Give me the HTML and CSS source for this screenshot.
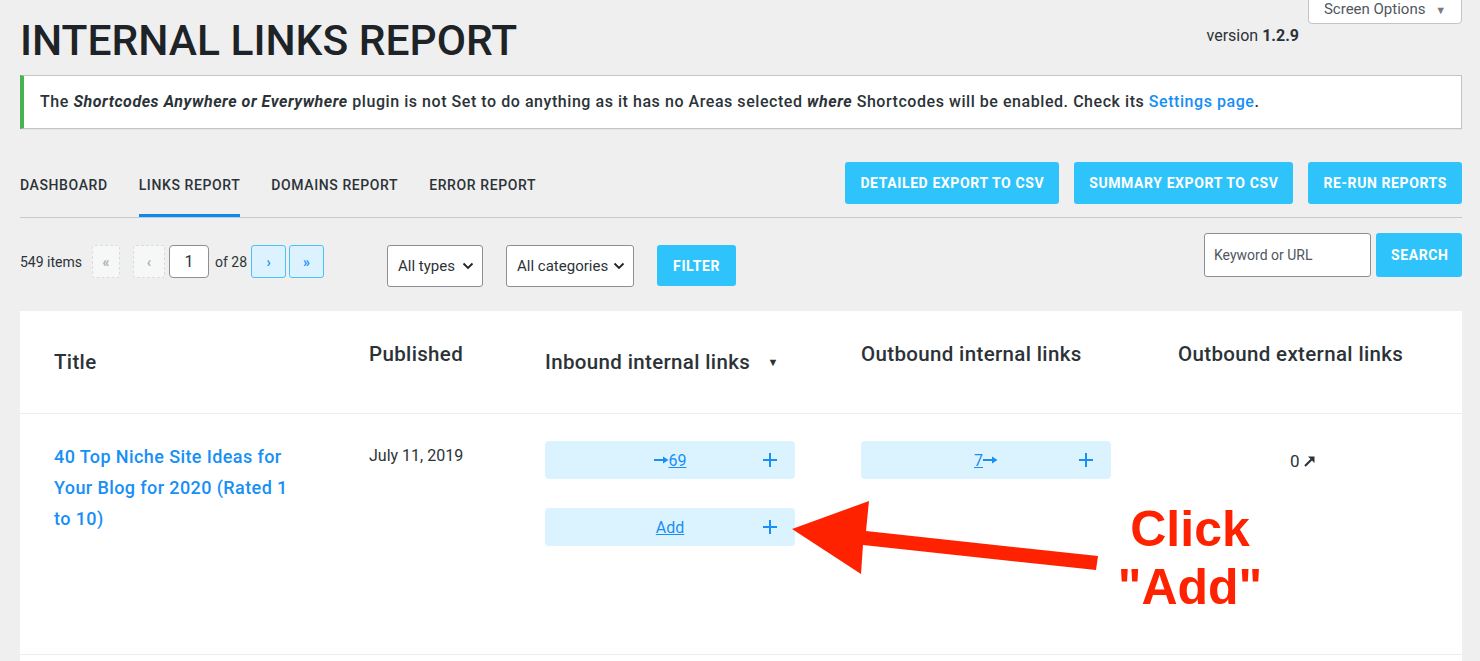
FILE: index.html
```html
<!DOCTYPE html>
<html lang="en">
<head>
  <meta charset="UTF-8" />
  <meta name="viewport" content="width=device-width, initial-scale=1.0" />
  <title>Internal Links Report</title>
  <link rel="stylesheet" href="styles.css">
</head>
<body>
  <div class="page">
    <header class="top">
      <h1>INTERNAL LINKS REPORT</h1>
      <div class="version">version <b>1.2.9</b></div>
      <button class="screen-options">Screen Options <span class="caret">&#9660;</span></button>
    </header>

    <div class="notice">
      The <b><i>Shortcodes Anywhere or Everywhere</i></b> plugin is not Set to do anything as it has no Areas selected <b><i>where</i></b> Shortcodes will be enabled. Check its <a href="#">Settings page</a>.
    </div>

    <div class="tabs-row">
      <nav class="tabs">
        <a href="#" class="tab">Dashboard</a>
        <a href="#" class="tab active">Links Report</a>
        <a href="#" class="tab">Domains Report</a>
        <a href="#" class="tab">Error Report</a>
      </nav>
      <div class="actions">
        <button class="btn">Detailed Export to CSV</button>
        <button class="btn">Summary Export to CSV</button>
        <button class="btn">Re-run Reports</button>
      </div>
    </div>

    <div class="toolbar">
      <div class="pager">
        <span class="count">549 items</span>
        <span class="pg disabled first">&laquo;</span>
        <span class="pg disabled">&lsaquo;</span>
        <input class="pg-input" type="text" value="1">
        <span class="of">of 28</span>
        <a href="#" class="pg on">&rsaquo;</a>
        <a href="#" class="pg on">&raquo;</a>
      </div>
      <div class="filters">
        <div class="select types">All types
          <svg width="12" height="8" viewBox="0 0 12 8"><path d="M1.5 1.5 6 6l4.5-4.5" fill="none" stroke="#1d2327" stroke-width="1.8"/></svg>
        </div>
        <div class="select cats">All categories
          <svg width="12" height="8" viewBox="0 0 12 8"><path d="M1.5 1.5 6 6l4.5-4.5" fill="none" stroke="#1d2327" stroke-width="1.8"/></svg>
        </div>
        <button class="btn filter">Filter</button>
      </div>
      <div class="search">
        <input type="text" placeholder="Keyword or URL">
        <button class="btn">Search</button>
      </div>
    </div>

    <div class="card">
      <div class="thead">
        <div class="th">Title</div>
        <div class="th up">Published</div>
        <div class="th">Inbound internal links <span class="sort">&#9660;</span></div>
        <div class="th up">Outbound internal links</div>
        <div class="th up">Outbound external links</div>
      </div>
      <div class="tr">
        <div class="td title"><a href="#">40 Top Niche Site Ideas for Your Blog for 2020 (Rated 1 to 10)</a></div>
        <div class="td date">July 11, 2019</div>
        <div class="td">
          <div class="box">
            <span class="num"><svg class="arr" width="15" height="8" viewBox="0 0 15 8"><path d="M0 4h10" stroke="#178ff5" stroke-width="2"/><path d="M9 0.5 14.5 4 9 7.5z" fill="#178ff5"/></svg><a href="#">69</a></span>
            <svg class="plus" width="16" height="16" viewBox="0 0 16 16"><path d="M8 1v14M1 8h14" stroke="#178ff5" stroke-width="2"/></svg>
          </div>
          <div class="box add">
            <span class="num"><a href="#">Add</a></span>
            <svg class="plus" width="16" height="16" viewBox="0 0 16 16"><path d="M8 1v14M1 8h14" stroke="#178ff5" stroke-width="2"/></svg>
          </div>
        </div>
        <div class="td">
          <div class="box">
            <span class="num"><a href="#">7</a><svg class="arr" width="15" height="8" viewBox="0 0 15 8"><path d="M0 4h10" stroke="#178ff5" stroke-width="2"/><path d="M9 0.5 14.5 4 9 7.5z" fill="#178ff5"/></svg></span>
            <svg class="plus" width="16" height="16" viewBox="0 0 16 16"><path d="M8 1v14M1 8h14" stroke="#178ff5" stroke-width="2"/></svg>
          </div>
        </div>
        <div class="td ext">0 <svg width="12" height="12" viewBox="0 0 12 12"><path d="M1 11 7.5 4.5" stroke="#2c3338" stroke-width="2.2"/><path d="M4 1.5h6.5V8z" fill="#2c3338"/></svg></div>
      </div>
    </div>

    <svg class="callout-arrow" width="1480" height="661" viewBox="0 0 1480 661">
      <polygon points="792,529 869,501 866,531 1098,556 1096,570 863,545 861,574" fill="#ff2200"/>
    </svg>
    <div class="callout-text">Click<br>"Add"</div>
  </div>
</body>
</html>
```

FILE: styles.css
```css
* {
  margin: 0;
  padding: 0;
  box-sizing: border-box;
}
body {
  background: #efefef;
  color: #1d2327;
  font-family: Roboto, "Noto Sans", sans-serif;
  overflow: hidden;
}
a {
  color: #178ff5;
}
button, input {
  font-family: inherit;
}
.page {
  position: relative;
  width: 1480px;
  height: 661px;
  overflow: hidden;
  padding: 0 18px 0 20px;
}

/* header */
.top {
  display: flex;
  align-items: flex-start;
}
h1 {
  font-size: 42.5px;
  font-weight: 500;
  line-height: 42px;
  margin-top: 20px;
  color: #1d2327;
  flex: 1;
}
.version {
  font-size: 16px;
  margin-top: 26px;
  margin-right: 9px;
  color: #2c3338;
}
.version b {
  font-weight: 700;
}
.screen-options {
  margin-top: -8px;
  height: 32px;
  width: 154px;
  padding-top: 1px;
  background: #fff;
  border: 1px solid #c3c4c7;
  border-radius: 0 0 4px 4px;
  font-size: 15px;
  color: #50575e;
}
.screen-options .caret {
  font-size: 11px;
  margin-left: 6px;
  color: #787c82;
}

/* notice */
.notice {
  margin-top: 13px;
  background: #fff;
  border: 1px solid #c3c4c7;
  border-left: 4px solid #46b450;
  padding: 15px 16px;
  font-size: 16px;
  letter-spacing: 0.55px;
  line-height: 22px;
  font-weight: 500;
  color: #2c3338;
  box-shadow: 0 1px 1px rgba(0,0,0,0.04);
}
.notice a {
  text-decoration: none;
  color: #178ff5;
}

/* tabs */
.tabs-row {
  display: flex;
  justify-content: space-between;
  align-items: flex-end;
  margin-top: 33px;
  border-bottom: 1px solid #c9c9c9;
}
.tabs {
  display: flex;
  gap: 31px;
}
.tab {
  font-size: 14px;
  font-weight: 500;
  text-transform: uppercase;
  letter-spacing: 0.6px;
  line-height: 20px;
  padding-bottom: 19px;
  border-bottom: 3px solid transparent;
  color: #2c3338;
  text-decoration: none;
}
.tab.active {
  border-bottom-color: #0a8af0;
}
.actions {
  display: flex;
  gap: 15px;
  margin-bottom: 13px;
}
.btn {
  height: 42px;
  padding: 0 15px;
  background: #2fc3fc;
  color: #fff;
  border: none;
  border-radius: 3px;
  font-size: 14px;
  font-weight: 700;
  text-transform: uppercase;
  letter-spacing: 0.6px;
}

/* toolbar */
.toolbar {
  display: flex;
  align-items: flex-start;
  margin-top: 15px;
}
.pager {
  display: flex;
  align-items: center;
  margin-top: 12px;
  font-size: 14px;
  color: #2c3338;
}
.count {
  margin-right: 10px;
}
.pg {
  width: 33px;
  height: 33px;
  display: flex;
  align-items: center;
  justify-content: center;
  border-radius: 3px;
  font-size: 14px;
  font-weight: 700;
  text-decoration: none;
}
.pg.disabled {
  width: 32px;
  background: #f6f7f7;
  border: 1px dashed #dcdcde;
  color: #a7aaad;
  margin-right: 4px;
}
.pg.first {
  width: 28px;
  margin-right: 13px;
}
.pg.on {
  width: 35px;
  background: #dcf3ff;
  border: 1px solid #48c2fa;
  color: #178ff5;
  margin-left: 3px;
}
.pg-input {
  width: 40px;
  height: 33px;
  border: 1px solid #8c8f94;
  border-radius: 4px;
  text-align: center;
  font-size: 16px;
  color: #2c3338;
}
.of {
  margin: 0 1px 0 6px;
}
.filters {
  display: flex;
  gap: 23px;
  margin-left: 63px;
  margin-top: 12px;
}
.select {
  height: 42px;
  display: flex;
  align-items: center;
  justify-content: space-between;
  padding: 0 8px 0 10px;
  background: #fff;
  border: 1px solid #8c8f94;
  border-radius: 3px;
  font-size: 15px;
  color: #2c3338;
}
.select.types {
  width: 96px;
}
.select.cats {
  width: 128px;
}
.btn.filter {
  width: 79px;
  height: 41px;
}
.search {
  margin-left: auto;
  display: flex;
  gap: 5px;
}
.search input {
  width: 167px;
  height: 44px;
  border: 1px solid #8c8f94;
  border-radius: 3px;
  padding: 0 9px;
  font-size: 14px;
}
.search input::placeholder {
  color: #50575e;
}
.search .btn {
  width: 86px;
  height: 44px;
}

/* table */
.card {
  margin-top: 24px;
  background: #fff;
  height: 351px;
}
.thead, .tr {
  display: grid;
  grid-template-columns: 315px 176px 316px 317px 1fr;
  padding: 0 34px;
  border-bottom: 1px solid #ececec;
}
.thead {
  height: 103px;
  align-items: center;
}
.th {
  font-size: 20.5px;
  font-weight: 500;
  letter-spacing: 0.35px;
  color: #2c3338;
}
.th.up {
  padding-bottom: 16px;
}
.sort {
  font-size: 11px;
  margin-left: 12px;
  vertical-align: 3px;
}
.tr {
  height: 241px;
  padding-top: 27px;
  align-items: start;
}
.td.title {
  padding-right: 70px;
  font-size: 18px;
  letter-spacing: 0.4px;
  line-height: 31px;
  font-weight: 500;
}
.td.title a {
  text-decoration: none;
}
.td.date {
  padding-top: 4px;
  font-size: 16px;
  line-height: 22px;
  color: #2c3338;
}
.box {
  width: 250px;
  height: 38px;
  background: #dbf3fe;
  border-radius: 4px;
  display: flex;
  align-items: center;
  padding: 0 17px 0 0;
  font-size: 16px;
}
.box.add {
  margin-top: 29px;
}
.box .num {
  flex: 1;
  text-align: center;
  padding-left: 33px;
}
.box .arr {
  vertical-align: 2px;
}
.ext {
  padding-top: 10px;
  text-align: center;
  font-size: 17px;
  color: #2c3338;
}

/* annotation */
.callout-arrow {
  position: absolute;
  top: 0;
  left: 0;
  pointer-events: none;
}
.callout-text {
  position: absolute;
  left: 1090px;
  top: 500px;
  width: 200px;
  text-align: center;
  font-family: "Liberation Sans", Arial, sans-serif;
  font-weight: 700;
  font-size: 50px;
  line-height: 58px;
  color: #ff2200;
}
```
